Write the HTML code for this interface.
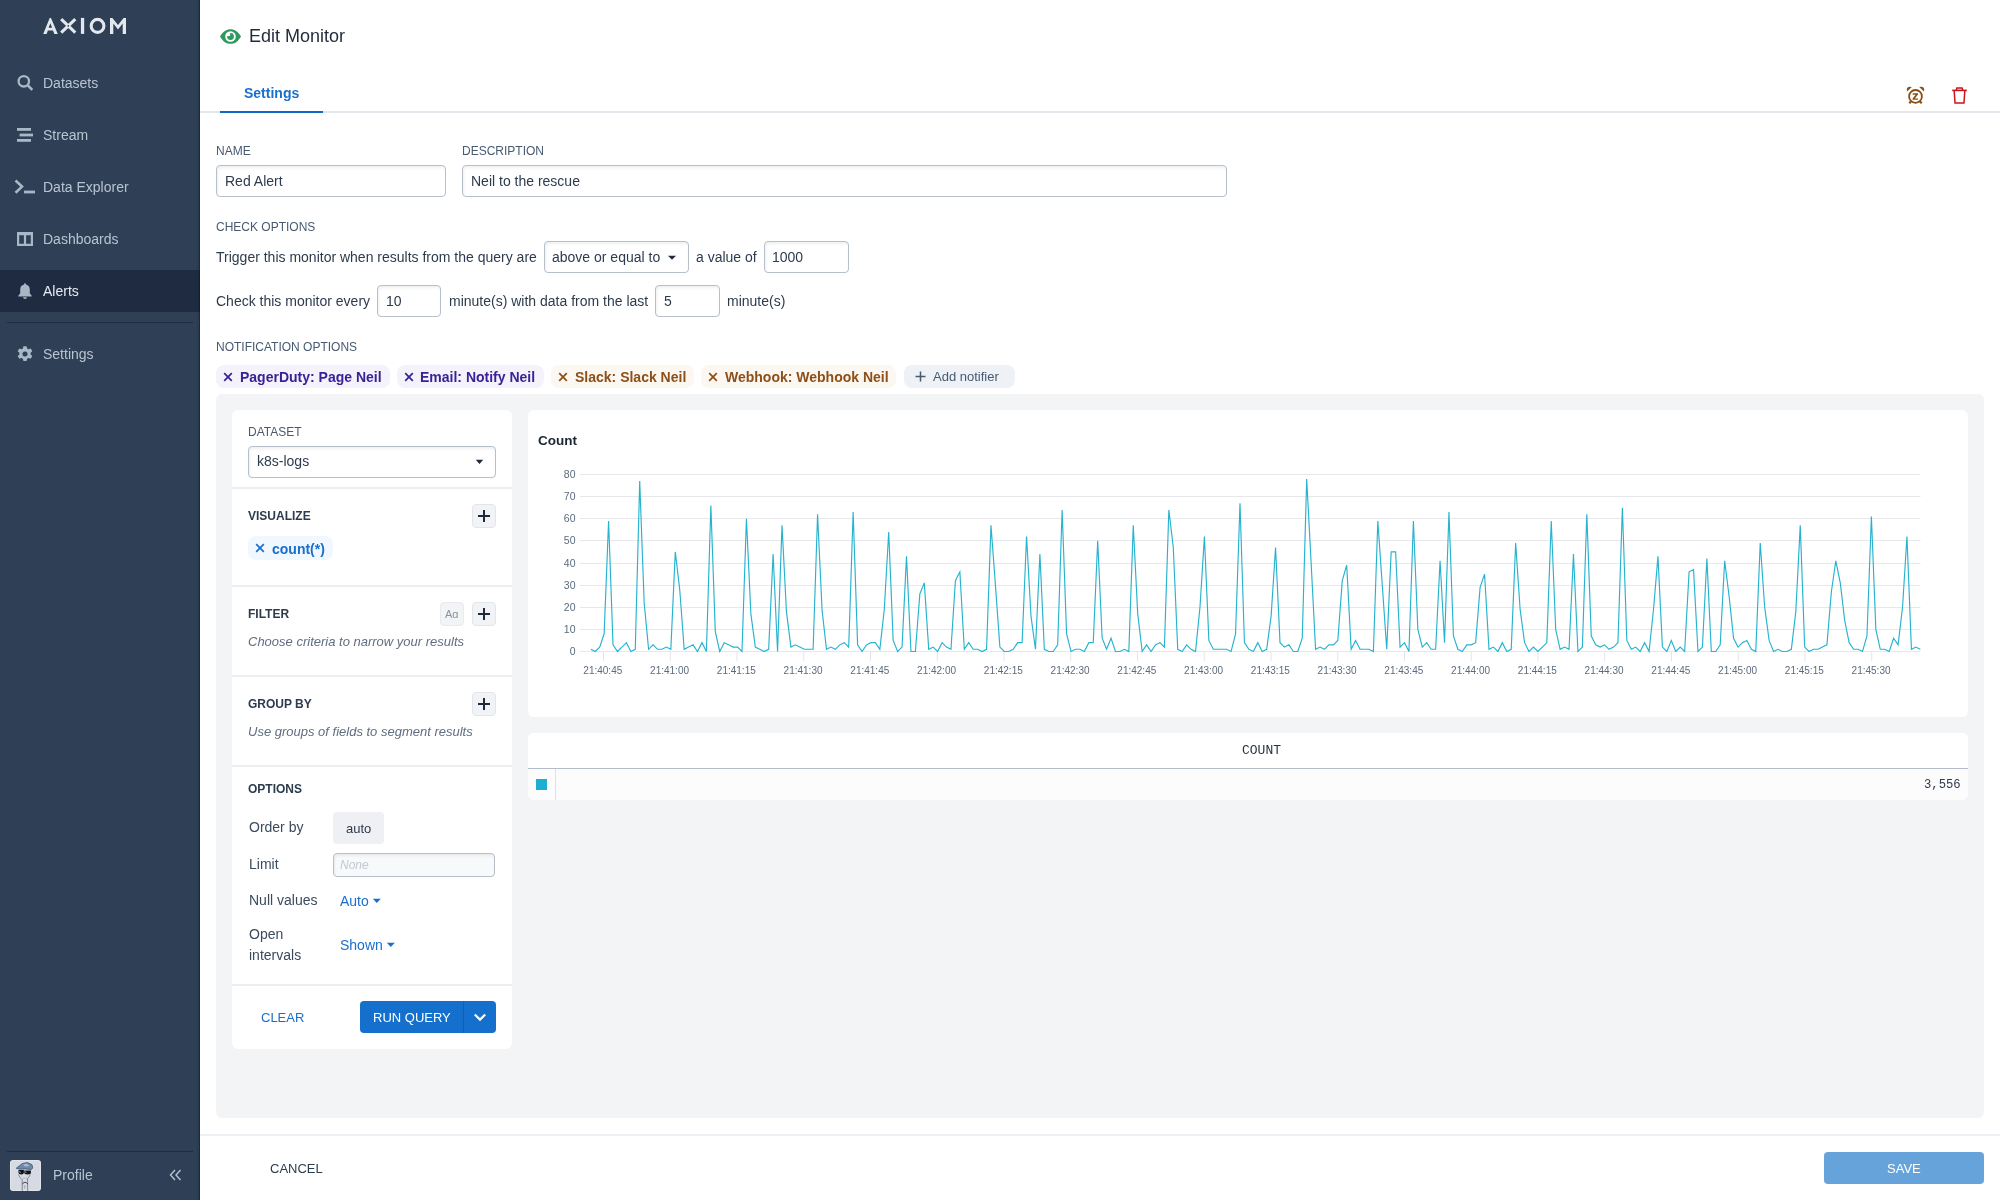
<!DOCTYPE html>
<html><head><meta charset="utf-8"><title>Edit Monitor</title>
<style>
html,body{margin:0;padding:0;width:2000px;height:1200px;overflow:hidden;background:#fff;font-family:"Liberation Sans",sans-serif;}
.t{position:absolute;white-space:nowrap;will-change:transform;}
.r{position:absolute;display:block;}
</style></head><body>
<div class="r" style="left:0px;top:0px;width:200px;height:1200px;background:#2e3f56;"></div>
<svg class="r" style="left:0px;top:0px" width="200" height="50" viewBox="0 0 200 50">
<g fill="#e3e7ee">
<path d="M43.2 33.9 L49.7 17.9 L51.0 17.9 L57.8 33.9 L54.3 33.9 L53.0 30.4 L47.9 30.4 L46.6 33.9 Z M50.35 23.3 L48.6 27.7 L52.1 27.7 Z" fill-rule="evenodd"/>
<rect x="80.9" y="17.9" width="3.3" height="16"/>
<path d="M110 33.9 L110 17.9 L112.4 17.9 L118 24.9 L123.6 17.9 L126 17.9 L126 33.9 L122.7 33.9 L122.7 23.6 L118 29.6 L113.3 23.6 L113.3 33.9 Z"/>
</g>
<g stroke="#e3e7ee" stroke-width="3.1" fill="none" stroke-linecap="butt">
<path d="M61.2 19.2 L67.7 25.4 M75.3 19.2 L68.8 25.4 M61.2 32.6 L67.7 26.4 M75.3 32.6 L68.8 26.4"/>
</g>
<ellipse cx="97.55" cy="25.9" rx="6.35" ry="6.5" stroke="#e3e7ee" stroke-width="3.1" fill="none"/>
</svg>
<div class="r" style="left:0px;top:270px;width:200px;height:42px;background:#1e2b41;"></div>
<div class="r" style="left:196px;top:0px;width:4px;height:1200px;background:linear-gradient(to right, rgba(10,20,35,0), rgba(10,20,35,0.18));"></div>
<div class="r" style="left:199px;top:0px;width:1px;height:1200px;background:rgba(5,12,25,0.35);"></div>
<svg class="r" style="left:16px;top:74px" width="18" height="18" viewBox="0 0 18 18"><circle cx="7.8" cy="7.3" r="5.2" stroke="#a9b7c6" stroke-width="2.3" fill="none"/><path d="M11.6 11.2 L16.3 15.9" stroke="#a9b7c6" stroke-width="2.6"/></svg>
<svg class="r" style="left:16px;top:126px" width="18" height="18" viewBox="0 0 18 18"><rect x="1" y="2" width="14" height="2.8" fill="#a9b7c6"/><rect x="3.6" y="7.6" width="13.4" height="2.8" fill="#a9b7c6"/><rect x="1" y="13" width="14" height="2.8" fill="#a9b7c6"/></svg>
<svg class="r" style="left:14px;top:179px" width="22" height="16" viewBox="0 0 22 16"><path d="M1.5 1.5 L8 7.6 L1.5 13.7" stroke="#a9b7c6" stroke-width="2.6" fill="none"/><rect x="10" y="11.6" width="11" height="2.8" fill="#a9b7c6"/></svg>
<svg class="r" style="left:16px;top:231px" width="18" height="16" viewBox="0 0 18 16"><path d="M1 1 H17 V15 H1 Z M3.2 4.2 V12.8 H7.9 V4.2 Z M10.1 4.2 V12.8 H14.8 V4.2 Z" fill="#a9b7c6" fill-rule="evenodd"/></svg>
<svg class="r" style="left:17px;top:282px" width="16" height="18" viewBox="0 0 16 18"><path d="M8 1.2 a1 1 0 0 1 1 1 v0.3 C11.6 3 12.8 5 12.8 7.6 v3.6 l1.9 2.6 v0.6 H1.3 v-0.6 l1.9-2.6 V7.6 C3.2 5 4.4 3 7 2.5 v-0.3 a1 1 0 0 1 1-1 Z M6 15.3 h4 a2 1.6 0 0 1 -4 0 Z" fill="#aab6c4"/></svg>
<svg class="r" style="left:17px;top:345px" width="16" height="18" viewBox="0 0 16 18"><g transform="translate(8 9)"><path d="M-1.6 -7.8 h3.2 l0.5 2.2 l1.5 0.8 l2.1 -0.8 l1.6 2.8 l-1.7 1.5 v1.7 l1.7 1.5 l-1.6 2.8 l-2.1 -0.8 l-1.5 0.8 l-0.5 2.2 h-3.2 l-0.5 -2.2 l-1.5 -0.8 l-2.1 0.8 l-1.6 -2.8 l1.7 -1.5 v-1.7 l-1.7 -1.5 l1.6 -2.8 l2.1 0.8 l1.5 -0.8 Z M0 -2.6 a2.6 2.6 0 1 0 0.01 0 Z" fill="#a9b7c6" fill-rule="evenodd"/></g></svg>
<div class="t" style="left:43px;top:74.00px;font-size:14px;line-height:18px;color:#b9c4d1;font-weight:normal;font-style:normal;font-family:'Liberation Sans', sans-serif;">Datasets</div>
<div class="t" style="left:43px;top:126.00px;font-size:14px;line-height:18px;color:#b9c4d1;font-weight:normal;font-style:normal;font-family:'Liberation Sans', sans-serif;">Stream</div>
<div class="t" style="left:43px;top:178.00px;font-size:14px;line-height:18px;color:#b9c4d1;font-weight:normal;font-style:normal;font-family:'Liberation Sans', sans-serif;">Data Explorer</div>
<div class="t" style="left:43px;top:230.00px;font-size:14px;line-height:18px;color:#b9c4d1;font-weight:normal;font-style:normal;font-family:'Liberation Sans', sans-serif;">Dashboards</div>
<div class="t" style="left:43px;top:282.00px;font-size:14px;line-height:18px;color:#e6ebf1;font-weight:normal;font-style:normal;font-family:'Liberation Sans', sans-serif;">Alerts</div>
<div class="t" style="left:43px;top:345.00px;font-size:14px;line-height:18px;color:#b9c4d1;font-weight:normal;font-style:normal;font-family:'Liberation Sans', sans-serif;">Settings</div>
<div class="r" style="left:7px;top:322px;width:186px;height:1px;background:#1f2c3f;"></div>
<div class="r" style="left:7px;top:1151px;width:186px;height:1px;background:#1f2c3f;"></div>
<svg class="r" style="left:10px;top:1160px" width="31" height="31" viewBox="0 0 31 31"><rect x="0" y="0" width="31" height="31" rx="3.2" fill="#d6dbe3"/>
<rect x="0.6" y="0.6" width="29.8" height="29.8" rx="2.8" fill="none" stroke="#e6e9ee" stroke-width="0.8"/>
<path d="M6.2 8.3 L12.4 3.5 L17.5 2.6 L22 4.7 L22.7 8 L21.4 9.5 L14.9 8.9 L10 9.2 Z" fill="#7189ab" stroke="#3f5475" stroke-width="0.8"/>
<path d="M13 4.5 L17 3.8 L19.5 6 L15 6.5 Z" fill="#a9bad2"/>
<path d="M8.5 10 H13.9 V12.8 Q13.9 14.4 11.2 14.4 Q8.5 14.4 8.5 12.8 Z M14.3 10.6 H20.9 V13 Q20.9 14.4 17.6 14.4 Q14.3 14.4 14.3 13 Z" fill="#111318"/>
<path d="M9.6 11 L10.4 13 M15.6 11.4 L16.2 13" stroke="#e8ebf0" stroke-width="0.6"/>
<path d="M8.3 14.3 L10.6 18.4 L13 20.2 M20.2 14.3 L19 17.2 L16.6 19" stroke="#6b7380" stroke-width="0.7" fill="none"/>
<path d="M13 18.2 L16.8 18.2" stroke="#8a93a0" stroke-width="0.6" stroke-dasharray="0.8 0.6"/>
<path d="M12.2 20.2 V31 M17.6 19 V31" stroke="#6d7683" stroke-width="0.8"/>
<path d="M12.5 24.2 C13 22 17 21.6 17.5 24.2" stroke="#2f3747" stroke-width="1" fill="none"/>
<path d="M13.5 25 L14.5 29.5 L16 26 Z" fill="#aab4c6"/>
</svg>
<div class="t" style="left:53px;top:1166.00px;font-size:14px;line-height:18px;color:#b9c4d1;font-weight:normal;font-style:normal;font-family:'Liberation Sans', sans-serif;">Profile</div>
<svg class="r" style="left:169px;top:1169px" width="13" height="12" viewBox="0 0 13 12"><path d="M6 1 L1.5 6 L6 11 M11.5 1 L7 6 L11.5 11" stroke="#b9c4d1" stroke-width="1.4" fill="none"/></svg>
<svg class="r" style="left:219px;top:28px" width="23" height="17" viewBox="0 0 23 17"><path d="M1 8.5 C4 3.2 7.5 1.2 11.5 1.2 C15.5 1.2 19 3.2 22 8.5 C19 13.8 15.5 15.8 11.5 15.8 C7.5 15.8 4 13.8 1 8.5 Z" fill="#2f9a60"/><circle cx="11.5" cy="8.5" r="5.3" fill="#fff"/><circle cx="11.5" cy="8.5" r="3.4" fill="#2f9a60"/><circle cx="9.4" cy="6.4" r="1.9" fill="#fff"/></svg>
<div class="t" style="left:248.5px;top:25.00px;font-size:18px;line-height:22px;color:#1f2a3a;font-weight:normal;font-style:normal;font-family:'Liberation Sans', sans-serif;">Edit Monitor</div>
<div class="t" style="left:243.7px;top:84.00px;font-size:14px;line-height:18px;color:#1a6fcc;font-weight:bold;font-style:normal;font-family:'Liberation Sans', sans-serif;">Settings</div>
<div class="r" style="left:200px;top:111px;width:1800px;height:2px;background:#e3e6eb;"></div>
<div class="r" style="left:220px;top:111px;width:103px;height:2px;background:#1068cc;"></div>
<svg class="r" style="left:1906px;top:86px" width="20" height="19" viewBox="0 0 20 19">
<g fill="#8a4e14"><path d="M1.0 5.6 Q-0.2 -0.2 5.8 1.0 Z"/><path d="M18.0 5.6 Q19.2 -0.2 13.2 1.0 Z"/></g>
<circle cx="9.5" cy="10.4" r="6.4" stroke="#8a4e14" stroke-width="1.8" fill="none"/>
<path d="M5.2 15.2 L3.3 17.3 M13.8 15.2 L15.7 17.3" stroke="#8a4e14" stroke-width="2.1"/>
<path d="M6.7 7.3 H12 V8.6 L8.9 12.4 H12.1 V13.8 H6.6 V12.5 L9.7 8.7 H6.7 Z" fill="#8a4e14"/>
</svg>
<svg class="r" style="left:1951px;top:86px" width="17" height="19" viewBox="0 0 17 19">
<path d="M1.2 4.4 H15.8" stroke="#c9151b" stroke-width="1.6"/>
<path d="M5.3 4.2 L5.9 2 H11.1 L11.7 4.2" stroke="#c9151b" stroke-width="1.5" fill="none"/>
<path d="M3.2 4.8 L4.0 17 H13.0 L13.8 4.8" stroke="#c9151b" stroke-width="1.5" fill="none"/>
</svg>
<div class="t" style="left:216px;top:144.00px;font-size:12px;line-height:15px;color:#475a70;font-weight:normal;font-style:normal;font-family:'Liberation Sans', sans-serif;">NAME</div>
<div class="t" style="left:462px;top:144.00px;font-size:12px;line-height:15px;color:#475a70;font-weight:normal;font-style:normal;font-family:'Liberation Sans', sans-serif;">DESCRIPTION</div>
<div class="r" style="left:216px;top:165px;width:230px;height:32px;border:1px solid #b6bfca;border-radius:4px;box-sizing:border-box;background:#fff;box-shadow:inset 1px 2px 3px rgba(30,40,60,0.07);"></div>
<div class="t" style="left:225px;top:172.00px;font-size:14px;line-height:18px;color:#2d3b4e;font-weight:normal;font-style:normal;font-family:'Liberation Sans', sans-serif;">Red Alert</div>
<div class="r" style="left:462px;top:165px;width:765px;height:32px;border:1px solid #b6bfca;border-radius:4px;box-sizing:border-box;background:#fff;box-shadow:inset 1px 2px 3px rgba(30,40,60,0.07);"></div>
<div class="t" style="left:471px;top:172.00px;font-size:14px;line-height:18px;color:#2d3b4e;font-weight:normal;font-style:normal;font-family:'Liberation Sans', sans-serif;">Neil to the rescue</div>
<div class="t" style="left:216px;top:220.00px;font-size:12px;line-height:15px;color:#475a70;font-weight:normal;font-style:normal;font-family:'Liberation Sans', sans-serif;">CHECK OPTIONS</div>
<div class="t" style="left:216px;top:248.00px;font-size:14px;line-height:18px;color:#2d3b4e;font-weight:normal;font-style:normal;font-family:'Liberation Sans', sans-serif;">Trigger this monitor when results from the query are</div>
<div class="r" style="left:544px;top:241px;width:145px;height:32px;border:1px solid #b6bfca;border-radius:4px;box-sizing:border-box;background:#fff;box-shadow:inset 1px 2px 3px rgba(30,40,60,0.07);"></div>
<div class="t" style="left:552px;top:248.00px;font-size:14px;line-height:18px;color:#2d3b4e;font-weight:normal;font-style:normal;font-family:'Liberation Sans', sans-serif;">above or equal to</div>
<svg class="r" style="left:667px;top:255px" width="10" height="6" viewBox="0 0 10 6"><path d="M1 0.8 H9 L5 4.8 Z" fill="#1f2a3a"/></svg>
<div class="t" style="left:696px;top:248.00px;font-size:14px;line-height:18px;color:#2d3b4e;font-weight:normal;font-style:normal;font-family:'Liberation Sans', sans-serif;">a value of</div>
<div class="r" style="left:764px;top:241px;width:85px;height:32px;border:1px solid #b6bfca;border-radius:4px;box-sizing:border-box;background:#fff;box-shadow:inset 1px 2px 3px rgba(30,40,60,0.07);"></div>
<div class="t" style="left:772.3px;top:248.00px;font-size:14px;line-height:18px;color:#2d3b4e;font-weight:normal;font-style:normal;font-family:'Liberation Sans', sans-serif;">1000</div>
<div class="t" style="left:216px;top:292.00px;font-size:14px;line-height:18px;color:#2d3b4e;font-weight:normal;font-style:normal;font-family:'Liberation Sans', sans-serif;">Check this monitor every</div>
<div class="r" style="left:377px;top:285px;width:64px;height:32px;border:1px solid #b6bfca;border-radius:4px;box-sizing:border-box;background:#fff;box-shadow:inset 1px 2px 3px rgba(30,40,60,0.07);"></div>
<div class="t" style="left:386px;top:292.00px;font-size:14px;line-height:18px;color:#2d3b4e;font-weight:normal;font-style:normal;font-family:'Liberation Sans', sans-serif;">10</div>
<div class="t" style="left:449px;top:292.00px;font-size:14px;line-height:18px;color:#2d3b4e;font-weight:normal;font-style:normal;font-family:'Liberation Sans', sans-serif;">minute(s) with data from the last</div>
<div class="r" style="left:655px;top:285px;width:65px;height:32px;border:1px solid #b6bfca;border-radius:4px;box-sizing:border-box;background:#fff;box-shadow:inset 1px 2px 3px rgba(30,40,60,0.07);"></div>
<div class="t" style="left:664.4px;top:292.00px;font-size:14px;line-height:18px;color:#2d3b4e;font-weight:normal;font-style:normal;font-family:'Liberation Sans', sans-serif;">5</div>
<div class="t" style="left:727px;top:292.00px;font-size:14px;line-height:18px;color:#2d3b4e;font-weight:normal;font-style:normal;font-family:'Liberation Sans', sans-serif;">minute(s)</div>
<div class="t" style="left:216px;top:340.00px;font-size:12px;line-height:15px;color:#475a70;font-weight:normal;font-style:normal;font-family:'Liberation Sans', sans-serif;">NOTIFICATION OPTIONS</div>
<div class="r" style="left:216px;top:365px;width:174px;height:23px;background:#f4f3fc;border-radius:8px;"></div>
<svg class="r" style="left:223px;top:372px" width="10" height="10" viewBox="0 0 10 10"><path d="M1.2 1.2 L8.8 8.8 M8.8 1.2 L1.2 8.8" stroke="#3b2196" stroke-width="1.7"/></svg>
<div class="t" style="left:240px;top:368.00px;font-size:14px;line-height:18px;color:#3b2196;font-weight:bold;font-style:normal;font-family:'Liberation Sans', sans-serif;">PagerDuty: Page Neil</div>
<div class="r" style="left:397px;top:365px;width:147px;height:23px;background:#f4f3fc;border-radius:8px;"></div>
<svg class="r" style="left:404px;top:372px" width="10" height="10" viewBox="0 0 10 10"><path d="M1.2 1.2 L8.8 8.8 M8.8 1.2 L1.2 8.8" stroke="#3b2196" stroke-width="1.7"/></svg>
<div class="t" style="left:420px;top:368.00px;font-size:14px;line-height:18px;color:#3b2196;font-weight:bold;font-style:normal;font-family:'Liberation Sans', sans-serif;">Email: Notify Neil</div>
<div class="r" style="left:551px;top:365px;width:143px;height:23px;background:#fdf7f1;border-radius:8px;"></div>
<svg class="r" style="left:558px;top:372px" width="10" height="10" viewBox="0 0 10 10"><path d="M1.2 1.2 L8.8 8.8 M8.8 1.2 L1.2 8.8" stroke="#8c4f17" stroke-width="1.7"/></svg>
<div class="t" style="left:575px;top:368.00px;font-size:14px;line-height:18px;color:#8c4f17;font-weight:bold;font-style:normal;font-family:'Liberation Sans', sans-serif;">Slack: Slack Neil</div>
<div class="r" style="left:701px;top:365px;width:195px;height:23px;background:#fdf7f1;border-radius:8px;"></div>
<svg class="r" style="left:708px;top:372px" width="10" height="10" viewBox="0 0 10 10"><path d="M1.2 1.2 L8.8 8.8 M8.8 1.2 L1.2 8.8" stroke="#8c4f17" stroke-width="1.7"/></svg>
<div class="t" style="left:725px;top:368.00px;font-size:14px;line-height:18px;color:#8c4f17;font-weight:bold;font-style:normal;font-family:'Liberation Sans', sans-serif;">Webhook: Webhook Neil</div>
<div class="r" style="left:904px;top:365px;width:111px;height:23px;background:#eef1f5;border-radius:8px;"></div>
<svg class="r" style="left:915px;top:371px" width="11" height="11" viewBox="0 0 11 11"><path d="M5.5 0.5 V10.5 M0.5 5.5 H10.5" stroke="#465a72" stroke-width="1.5"/></svg>
<div class="t" style="left:933px;top:369.00px;font-size:13px;line-height:16px;color:#465a72;font-weight:normal;font-style:normal;font-family:'Liberation Sans', sans-serif;">Add notifier</div>
<div class="r" style="left:216px;top:394px;width:1768px;height:724px;background:#f3f4f6;border-radius:6px;"></div>
<div class="r" style="left:232px;top:410px;width:280px;height:639px;background:#fff;border-radius:6px;"></div>
<div class="r" style="left:232px;top:487px;width:280px;height:2px;background:#eceef2;"></div>
<div class="r" style="left:232px;top:585px;width:280px;height:2px;background:#eceef2;"></div>
<div class="r" style="left:232px;top:675px;width:280px;height:2px;background:#eceef2;"></div>
<div class="r" style="left:232px;top:765px;width:280px;height:2px;background:#eceef2;"></div>
<div class="r" style="left:232px;top:984px;width:280px;height:2px;background:#eceef2;"></div>
<div class="t" style="left:248px;top:425.00px;font-size:12px;line-height:15px;color:#475a70;font-weight:normal;font-style:normal;font-family:'Liberation Sans', sans-serif;">DATASET</div>
<div class="r" style="left:248px;top:446px;width:248px;height:32px;border:1px solid #b6bfca;border-radius:4px;box-sizing:border-box;background:#fff;box-shadow:inset 1px 2px 3px rgba(30,40,60,0.07);"></div>
<div class="t" style="left:257px;top:452.00px;font-size:14px;line-height:18px;color:#2d3b4e;font-weight:normal;font-style:normal;font-family:'Liberation Sans', sans-serif;">k8s-logs</div>
<svg class="r" style="left:475px;top:459px" width="9" height="6" viewBox="0 0 9 6"><path d="M0.8 0.8 H8.2 L4.5 4.9 Z" fill="#1f2a3a"/></svg>
<div class="t" style="left:248px;top:509.00px;font-size:12px;line-height:15px;color:#2d3b4e;font-weight:bold;font-style:normal;font-family:'Liberation Sans', sans-serif;">VISUALIZE</div>
<div class="r" style="left:472px;top:504px;width:24px;height:24px;background:#f1f3f6;border:1px solid #e2e6eb;border-radius:4px;box-sizing:border-box;"></div>
<svg class="r" style="left:477px;top:509px" width="14" height="14" viewBox="0 0 14 14"><path d="M7 1 V13 M1 7 H13" stroke="#1e293b" stroke-width="2"/></svg>
<div class="r" style="left:248px;top:536px;width:85px;height:24px;background:#f1f7fe;border-radius:8px;"></div>
<svg class="r" style="left:255px;top:543px" width="10" height="10" viewBox="0 0 10 10"><path d="M1.2 1.2 L8.8 8.8 M8.8 1.2 L1.2 8.8" stroke="#1a6fcc" stroke-width="1.7"/></svg>
<div class="t" style="left:272px;top:540.00px;font-size:14px;line-height:18px;color:#1a6fcc;font-weight:bold;font-style:normal;font-family:'Liberation Sans', sans-serif;">count(*)</div>
<div class="t" style="left:248px;top:607.00px;font-size:12px;line-height:15px;color:#2d3b4e;font-weight:bold;font-style:normal;font-family:'Liberation Sans', sans-serif;">FILTER</div>
<div class="r" style="left:440px;top:602px;width:24px;height:24px;background:#f3f4f6;border:1px solid #e8eaee;border-radius:4px;box-sizing:border-box;"></div>
<div class="t" style="left:445.2px;top:607.00px;font-size:11px;line-height:14px;color:#8794a3;font-weight:normal;font-style:normal;font-family:'Liberation Sans', sans-serif;">A<span style="font-family:'Liberation Sans';">ɑ</span></div>
<div class="r" style="left:472px;top:602px;width:24px;height:24px;background:#f1f3f6;border:1px solid #e2e6eb;border-radius:4px;box-sizing:border-box;"></div>
<svg class="r" style="left:477px;top:607px" width="14" height="14" viewBox="0 0 14 14"><path d="M7 1 V13 M1 7 H13" stroke="#1e293b" stroke-width="2"/></svg>
<div class="t" style="left:248px;top:634.00px;font-size:13px;line-height:16px;color:#5f6e80;font-weight:normal;font-style:italic;font-family:'Liberation Sans', sans-serif;">Choose criteria to narrow your results</div>
<div class="t" style="left:248px;top:697.00px;font-size:12px;line-height:15px;color:#2d3b4e;font-weight:bold;font-style:normal;font-family:'Liberation Sans', sans-serif;">GROUP BY</div>
<div class="r" style="left:472px;top:692px;width:24px;height:24px;background:#f1f3f6;border:1px solid #e2e6eb;border-radius:4px;box-sizing:border-box;"></div>
<svg class="r" style="left:477px;top:697px" width="14" height="14" viewBox="0 0 14 14"><path d="M7 1 V13 M1 7 H13" stroke="#1e293b" stroke-width="2"/></svg>
<div class="t" style="left:248px;top:724.00px;font-size:13px;line-height:16px;color:#5f6e80;font-weight:normal;font-style:italic;font-family:'Liberation Sans', sans-serif;">Use groups of fields to segment results</div>
<div class="t" style="left:248px;top:782.00px;font-size:12px;line-height:15px;color:#2d3b4e;font-weight:bold;font-style:normal;font-family:'Liberation Sans', sans-serif;">OPTIONS</div>
<div class="t" style="left:249px;top:818.00px;font-size:14px;line-height:18px;color:#3b4a5e;font-weight:normal;font-style:normal;font-family:'Liberation Sans', sans-serif;">Order by</div>
<div class="r" style="left:333px;top:812px;width:51px;height:32px;background:#eef0f4;border-radius:4px;"></div>
<div class="t" style="left:346px;top:821.00px;font-size:13px;line-height:16px;color:#2d3b4e;font-weight:normal;font-style:normal;font-family:'Liberation Sans', sans-serif;">auto</div>
<div class="t" style="left:249px;top:855.00px;font-size:14px;line-height:18px;color:#3b4a5e;font-weight:normal;font-style:normal;font-family:'Liberation Sans', sans-serif;">Limit</div>
<div class="r" style="left:333px;top:853px;width:162px;height:24px;border:1px solid #b6bfca;border-radius:4px;box-sizing:border-box;background:#fff;box-shadow:inset 1px 2px 3px rgba(30,40,60,0.07);background:#f8f9fa;"></div>
<div class="t" style="left:340px;top:858.00px;font-size:12px;line-height:15px;color:#c3c9d1;font-weight:normal;font-style:italic;font-family:'Liberation Sans', sans-serif;">None</div>
<div class="t" style="left:249px;top:891.00px;font-size:14px;line-height:18px;color:#3b4a5e;font-weight:normal;font-style:normal;font-family:'Liberation Sans', sans-serif;">Null values</div>
<div class="t" style="left:340px;top:892.00px;font-size:14px;line-height:18px;color:#1a6fcc;font-weight:normal;font-style:normal;font-family:'Liberation Sans', sans-serif;">Auto</div>
<svg class="r" style="left:372px;top:898px" width="10" height="6" viewBox="0 0 10 6"><path d="M0.8 0.8 H8.8 L4.8 4.9 Z" fill="#1a6fcc"/></svg>
<div class="t" style="left:249px;top:925.00px;font-size:14px;line-height:18px;color:#3b4a5e;font-weight:normal;font-style:normal;font-family:'Liberation Sans', sans-serif;">Open</div>
<div class="t" style="left:249px;top:946.00px;font-size:14px;line-height:18px;color:#3b4a5e;font-weight:normal;font-style:normal;font-family:'Liberation Sans', sans-serif;">intervals</div>
<div class="t" style="left:340px;top:936.00px;font-size:14px;line-height:18px;color:#1a6fcc;font-weight:normal;font-style:normal;font-family:'Liberation Sans', sans-serif;">Shown</div>
<svg class="r" style="left:386px;top:942px" width="10" height="6" viewBox="0 0 10 6"><path d="M0.8 0.8 H8.8 L4.8 4.9 Z" fill="#1a6fcc"/></svg>
<div class="t" style="left:261px;top:1010.00px;font-size:13px;line-height:16px;color:#1a6fcc;font-weight:normal;font-style:normal;font-family:'Liberation Sans', sans-serif;">CLEAR</div>
<div class="r" style="left:360px;top:1001px;width:136px;height:32px;background:#1570cd;border-radius:4px;"></div>
<div class="r" style="left:463px;top:1001px;width:1px;height:32px;background:#0f5fb3;"></div>
<div class="t" style="left:373px;top:1010.00px;font-size:13px;line-height:16px;color:#ffffff;font-weight:normal;font-style:normal;font-family:'Liberation Sans', sans-serif;">RUN QUERY</div>
<svg class="r" style="left:473px;top:1012px" width="14" height="11" viewBox="0 0 14 11"><path d="M1.8 2.5 L7 7.6 L12.2 2.5" stroke="#fff" stroke-width="2.2" fill="none"/></svg>
<div class="r" style="left:528px;top:410px;width:1440px;height:307px;background:#fff;border-radius:6px;"></div>
<div class="t" style="left:538px;top:432.00px;font-size:13.5px;line-height:17px;color:#1b2432;font-weight:bold;font-style:normal;font-family:'Liberation Sans', sans-serif;">Count</div>
<svg class="r" style="left:528px;top:410px" width="1440" height="307" viewBox="0 0 1440 307"><line x1="52" y1="241.50" x2="1392.5" y2="241.50" stroke="#e6e8eb" stroke-width="1"/><text x="47.5" y="245.10" text-anchor="end" font-family="Liberation Sans, sans-serif" font-size="10.5" fill="#5b6b7e">0</text><line x1="52" y1="219.50" x2="1392.5" y2="219.50" stroke="#e6e8eb" stroke-width="1"/><text x="47.5" y="223.10" text-anchor="end" font-family="Liberation Sans, sans-serif" font-size="10.5" fill="#5b6b7e">10</text><line x1="52" y1="197.50" x2="1392.5" y2="197.50" stroke="#e6e8eb" stroke-width="1"/><text x="47.5" y="201.10" text-anchor="end" font-family="Liberation Sans, sans-serif" font-size="10.5" fill="#5b6b7e">20</text><line x1="52" y1="175.50" x2="1392.5" y2="175.50" stroke="#e6e8eb" stroke-width="1"/><text x="47.5" y="179.10" text-anchor="end" font-family="Liberation Sans, sans-serif" font-size="10.5" fill="#5b6b7e">30</text><line x1="52" y1="153.50" x2="1392.5" y2="153.50" stroke="#e6e8eb" stroke-width="1"/><text x="47.5" y="157.10" text-anchor="end" font-family="Liberation Sans, sans-serif" font-size="10.5" fill="#5b6b7e">40</text><line x1="52" y1="130.50" x2="1392.5" y2="130.50" stroke="#e6e8eb" stroke-width="1"/><text x="47.5" y="134.10" text-anchor="end" font-family="Liberation Sans, sans-serif" font-size="10.5" fill="#5b6b7e">50</text><line x1="52" y1="108.50" x2="1392.5" y2="108.50" stroke="#e6e8eb" stroke-width="1"/><text x="47.5" y="112.10" text-anchor="end" font-family="Liberation Sans, sans-serif" font-size="10.5" fill="#5b6b7e">60</text><line x1="52" y1="86.50" x2="1392.5" y2="86.50" stroke="#e6e8eb" stroke-width="1"/><text x="47.5" y="90.10" text-anchor="end" font-family="Liberation Sans, sans-serif" font-size="10.5" fill="#5b6b7e">70</text><line x1="52" y1="64.50" x2="1392.5" y2="64.50" stroke="#e6e8eb" stroke-width="1"/><text x="47.5" y="68.10" text-anchor="end" font-family="Liberation Sans, sans-serif" font-size="10.5" fill="#5b6b7e">80</text><line x1="75.50" y1="241" x2="75.50" y2="251" stroke="#e3e5e8" stroke-width="1"/><text x="74.80" y="263.79999999999995" text-anchor="middle" font-family="Liberation Sans, sans-serif" font-size="10" fill="#5b6b7e">21:40:45</text><line x1="142.25" y1="241" x2="142.25" y2="251" stroke="#e3e5e8" stroke-width="1"/><text x="141.55" y="263.79999999999995" text-anchor="middle" font-family="Liberation Sans, sans-serif" font-size="10" fill="#5b6b7e">21:41:00</text><line x1="209.00" y1="241" x2="209.00" y2="251" stroke="#e3e5e8" stroke-width="1"/><text x="208.30" y="263.79999999999995" text-anchor="middle" font-family="Liberation Sans, sans-serif" font-size="10" fill="#5b6b7e">21:41:15</text><line x1="275.75" y1="241" x2="275.75" y2="251" stroke="#e3e5e8" stroke-width="1"/><text x="275.05" y="263.79999999999995" text-anchor="middle" font-family="Liberation Sans, sans-serif" font-size="10" fill="#5b6b7e">21:41:30</text><line x1="342.50" y1="241" x2="342.50" y2="251" stroke="#e3e5e8" stroke-width="1"/><text x="341.80" y="263.79999999999995" text-anchor="middle" font-family="Liberation Sans, sans-serif" font-size="10" fill="#5b6b7e">21:41:45</text><line x1="409.25" y1="241" x2="409.25" y2="251" stroke="#e3e5e8" stroke-width="1"/><text x="408.55" y="263.79999999999995" text-anchor="middle" font-family="Liberation Sans, sans-serif" font-size="10" fill="#5b6b7e">21:42:00</text><line x1="476.00" y1="241" x2="476.00" y2="251" stroke="#e3e5e8" stroke-width="1"/><text x="475.30" y="263.79999999999995" text-anchor="middle" font-family="Liberation Sans, sans-serif" font-size="10" fill="#5b6b7e">21:42:15</text><line x1="542.75" y1="241" x2="542.75" y2="251" stroke="#e3e5e8" stroke-width="1"/><text x="542.05" y="263.79999999999995" text-anchor="middle" font-family="Liberation Sans, sans-serif" font-size="10" fill="#5b6b7e">21:42:30</text><line x1="609.50" y1="241" x2="609.50" y2="251" stroke="#e3e5e8" stroke-width="1"/><text x="608.80" y="263.79999999999995" text-anchor="middle" font-family="Liberation Sans, sans-serif" font-size="10" fill="#5b6b7e">21:42:45</text><line x1="676.25" y1="241" x2="676.25" y2="251" stroke="#e3e5e8" stroke-width="1"/><text x="675.55" y="263.79999999999995" text-anchor="middle" font-family="Liberation Sans, sans-serif" font-size="10" fill="#5b6b7e">21:43:00</text><line x1="743.00" y1="241" x2="743.00" y2="251" stroke="#e3e5e8" stroke-width="1"/><text x="742.30" y="263.79999999999995" text-anchor="middle" font-family="Liberation Sans, sans-serif" font-size="10" fill="#5b6b7e">21:43:15</text><line x1="809.75" y1="241" x2="809.75" y2="251" stroke="#e3e5e8" stroke-width="1"/><text x="809.05" y="263.79999999999995" text-anchor="middle" font-family="Liberation Sans, sans-serif" font-size="10" fill="#5b6b7e">21:43:30</text><line x1="876.50" y1="241" x2="876.50" y2="251" stroke="#e3e5e8" stroke-width="1"/><text x="875.80" y="263.79999999999995" text-anchor="middle" font-family="Liberation Sans, sans-serif" font-size="10" fill="#5b6b7e">21:43:45</text><line x1="943.25" y1="241" x2="943.25" y2="251" stroke="#e3e5e8" stroke-width="1"/><text x="942.55" y="263.79999999999995" text-anchor="middle" font-family="Liberation Sans, sans-serif" font-size="10" fill="#5b6b7e">21:44:00</text><line x1="1010.00" y1="241" x2="1010.00" y2="251" stroke="#e3e5e8" stroke-width="1"/><text x="1009.30" y="263.79999999999995" text-anchor="middle" font-family="Liberation Sans, sans-serif" font-size="10" fill="#5b6b7e">21:44:15</text><line x1="1076.75" y1="241" x2="1076.75" y2="251" stroke="#e3e5e8" stroke-width="1"/><text x="1076.05" y="263.79999999999995" text-anchor="middle" font-family="Liberation Sans, sans-serif" font-size="10" fill="#5b6b7e">21:44:30</text><line x1="1143.50" y1="241" x2="1143.50" y2="251" stroke="#e3e5e8" stroke-width="1"/><text x="1142.80" y="263.79999999999995" text-anchor="middle" font-family="Liberation Sans, sans-serif" font-size="10" fill="#5b6b7e">21:44:45</text><line x1="1210.25" y1="241" x2="1210.25" y2="251" stroke="#e3e5e8" stroke-width="1"/><text x="1209.55" y="263.79999999999995" text-anchor="middle" font-family="Liberation Sans, sans-serif" font-size="10" fill="#5b6b7e">21:45:00</text><line x1="1277.00" y1="241" x2="1277.00" y2="251" stroke="#e3e5e8" stroke-width="1"/><text x="1276.30" y="263.79999999999995" text-anchor="middle" font-family="Liberation Sans, sans-serif" font-size="10" fill="#5b6b7e">21:45:15</text><line x1="1343.75" y1="241" x2="1343.75" y2="251" stroke="#e3e5e8" stroke-width="1"/><text x="1343.05" y="263.79999999999995" text-anchor="middle" font-family="Liberation Sans, sans-serif" font-size="10" fill="#5b6b7e">21:45:30</text><polyline points="62.80,239.29 67.25,241.50 71.69,237.08 76.14,223.80 80.59,110.96 85.03,234.86 89.48,241.50 93.93,237.08 98.37,232.65 102.82,241.50 107.26,239.29 111.71,71.14 116.16,192.83 120.60,239.29 125.05,234.86 129.50,239.29 133.94,239.29 138.39,237.08 142.84,239.29 147.28,141.94 151.73,179.55 156.18,239.29 160.62,237.08 165.07,234.86 169.52,241.50 173.96,232.65 178.41,241.50 182.86,95.48 187.30,221.59 191.75,241.50 196.19,232.65 200.64,234.86 205.09,237.08 209.53,237.08 213.98,241.50 218.43,108.75 222.87,203.89 227.32,237.08 231.77,239.29 236.21,241.50 240.66,239.29 245.11,144.15 249.55,241.50 254.00,115.39 258.45,201.67 262.89,237.08 267.34,234.86 271.79,237.08 276.23,239.29 280.68,239.29 285.12,239.29 289.57,104.33 294.02,199.46 298.46,239.29 302.91,237.08 307.36,239.29 311.80,234.86 316.25,232.65 320.70,237.08 325.14,102.11 329.59,234.86 334.04,241.50 338.48,234.86 342.93,232.65 347.38,232.65 351.82,239.29 356.27,199.46 360.72,122.02 365.16,230.44 369.61,241.50 374.05,237.08 378.50,146.36 382.95,241.50 387.39,241.50 391.84,183.98 396.29,172.91 400.73,239.29 405.18,237.08 409.63,241.50 414.07,232.65 418.52,237.08 422.97,239.29 427.41,170.70 431.86,161.85 436.31,239.29 440.75,232.65 445.20,239.29 449.65,239.29 454.09,241.50 458.54,239.29 462.99,115.39 467.43,175.12 471.88,237.08 476.32,241.50 480.77,241.50 485.22,239.29 489.66,232.65 494.11,232.65 498.56,126.45 503.00,206.10 507.45,239.29 511.90,144.15 516.34,239.29 520.79,241.50 525.24,241.50 529.68,234.86 534.13,99.90 538.58,223.80 543.02,241.50 547.47,239.29 551.91,239.29 556.36,241.50 560.81,232.65 565.25,232.65 569.70,130.88 574.15,228.23 578.59,239.29 583.04,228.23 587.49,241.50 591.93,241.50 596.38,239.29 600.83,241.50 605.27,115.39 609.72,203.89 614.17,241.50 618.61,234.86 623.06,241.50 627.51,234.86 631.95,232.65 636.40,237.08 640.85,99.90 645.29,137.51 649.74,239.29 654.18,241.50 658.63,234.86 663.08,239.29 667.52,241.50 671.97,197.25 676.42,126.45 680.86,230.44 685.31,239.29 689.76,239.29 694.20,239.29 698.65,239.29 703.10,241.50 707.54,223.80 711.99,93.26 716.44,232.65 720.88,239.29 725.33,241.50 729.78,232.65 734.22,241.50 738.67,239.29 743.11,206.10 747.56,137.51 752.01,232.65 756.45,237.08 760.90,234.86 765.35,241.50 769.79,241.50 774.24,228.23 778.69,68.93 783.13,153.00 787.58,239.29 792.03,237.08 796.47,239.29 800.92,234.86 805.37,234.86 809.81,230.44 814.26,170.70 818.70,155.21 823.15,239.29 827.60,230.44 832.04,239.29 836.49,239.29 840.94,239.29 845.38,241.50 849.83,110.96 854.28,175.12 858.72,239.29 863.17,141.94 867.62,141.94 872.06,237.08 876.51,232.65 880.96,241.50 885.40,110.96 889.85,219.38 894.30,237.08 898.74,232.65 903.19,239.29 907.63,239.29 912.08,150.79 916.53,232.65 920.97,102.11 925.42,226.01 929.87,239.29 934.31,241.50 938.76,234.86 943.21,234.86 947.65,232.65 952.10,177.34 956.55,164.06 960.99,239.29 965.44,237.08 969.89,241.50 974.33,232.65 978.78,241.50 983.23,239.29 987.67,133.09 992.12,199.46 996.57,232.65 1001.01,241.50 1005.46,237.08 1009.90,241.50 1014.35,237.08 1018.80,232.65 1023.24,110.96 1027.69,219.38 1032.14,239.29 1036.58,237.08 1041.03,239.29 1045.48,144.15 1049.92,241.50 1054.37,237.08 1058.82,104.33 1063.26,226.01 1067.71,234.86 1072.16,237.08 1076.60,234.86 1081.05,239.29 1085.49,237.08 1089.94,232.65 1094.39,97.69 1098.83,230.44 1103.28,239.29 1107.73,237.08 1112.17,241.50 1116.62,232.65 1121.07,241.50 1125.51,199.46 1129.96,146.36 1134.41,237.08 1138.85,241.50 1143.30,230.44 1147.75,241.50 1152.19,237.08 1156.64,241.50 1161.09,161.85 1165.53,159.64 1169.98,241.50 1174.42,237.08 1178.87,148.58 1183.32,241.50 1187.76,241.50 1192.21,234.86 1196.66,150.79 1201.10,186.19 1205.55,228.23 1210.00,237.08 1214.44,232.65 1218.89,230.44 1223.34,239.29 1227.78,241.50 1232.23,133.09 1236.68,197.25 1241.12,230.44 1245.57,241.50 1250.02,239.29 1254.46,241.50 1258.91,241.50 1263.36,239.29 1267.80,201.67 1272.25,115.39 1276.69,237.08 1281.14,241.50 1285.59,239.29 1290.03,239.29 1294.48,237.08 1298.93,234.86 1303.37,181.76 1307.82,150.79 1312.27,172.91 1316.71,210.52 1321.16,232.65 1325.61,239.29 1330.05,239.29 1334.50,241.50 1338.95,226.01 1343.39,106.54 1347.84,219.38 1352.29,239.29 1356.73,239.29 1361.18,241.50 1365.62,228.23 1370.07,234.86 1374.52,197.25 1378.96,126.45 1383.41,239.29 1387.86,237.08 1392.30,239.29" fill="none" stroke="#27b3cf" stroke-width="1.15" stroke-linejoin="miter"/></svg>
<div class="r" style="left:528px;top:733px;width:1440px;height:67px;background:#fcfcfd;border-radius:6px;overflow:hidden;"></div>
<div class="r" style="left:528px;top:733px;width:1440px;height:35px;background:#fff;border-radius:6px 6px 0 0;"></div>
<div class="r" style="left:528px;top:767.5px;width:1440px;height:1.5px;background:#b3bdc9;"></div>
<div class="r" style="left:555px;top:769px;width:1px;height:31px;background:#dfe3e8;"></div>
<div class="r" style="left:536px;top:779px;width:11px;height:11px;background:#1cafd2;"></div>
<div class="t" style="left:1242px;top:743.00px;font-size:13px;line-height:16px;color:#263243;font-weight:normal;font-style:normal;font-family:'Liberation Mono', monospace;">COUNT</div>
<div class="t" style="right:39.5px;text-align:right;top:778.00px;font-size:12.2px;line-height:15px;color:#2d3b4e;font-weight:normal;font-style:normal;font-family:'Liberation Mono', monospace;">3,556</div>
<div class="r" style="left:200px;top:1134px;width:1800px;height:2px;background:#eef0f5;"></div>
<div class="t" style="left:269.5px;top:1161.00px;font-size:13px;line-height:16px;color:#2d3b4e;font-weight:normal;font-style:normal;font-family:'Liberation Sans', sans-serif;">CANCEL</div>
<div class="r" style="left:1824px;top:1152px;width:160px;height:32px;background:#67a3db;border-radius:4px;"></div>
<div class="t" style="left:1887px;top:1161.00px;font-size:13px;line-height:16px;color:#ffffff;font-weight:normal;font-style:normal;font-family:'Liberation Sans', sans-serif;">SAVE</div>
</body></html>
